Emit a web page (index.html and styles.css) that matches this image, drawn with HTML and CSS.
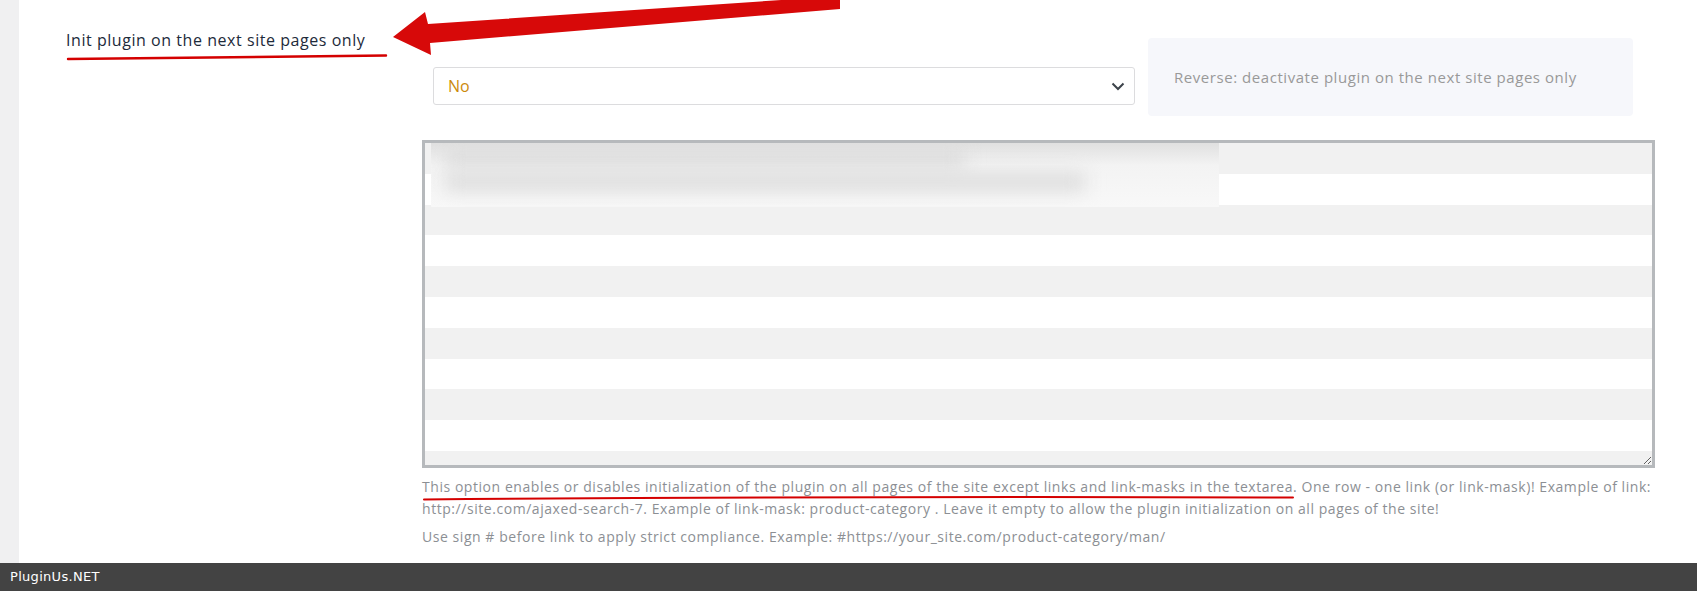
FILE: index.html
```html
<!DOCTYPE html>
<html lang="en">
<head>
  <meta charset="UTF-8">
  <meta name="viewport" content="width=device-width, initial-scale=1.0">
  <title>Init plugin on pages</title>
  <link rel="stylesheet" href="styles.css">
</head>
<body>

<div class="page">
  <div class="sidebar"></div>
  <div class="content">
    <div class="option-label">Init plugin on the next site pages only</div>

    <div class="option-field">
      <div class="top-row">
        <div class="select-wrap">
          <select class="mode-select">
            <option value="0">No</option>
            <option value="1">Yes</option>
          </select>
          <svg class="chevron" width="14" height="9" viewBox="0 0 14 9">
            <path d="M1.5 1.5 L7 7 L12.5 1.5" fill="none" stroke="#3c434a" stroke-width="2"/>
          </svg>
        </div>
        <div class="reverse-note">Reverse: deactivate plugin on the next site pages only</div>
      </div>

      <div class="textarea-wrap">
        <textarea class="links-area"></textarea>
        <!-- blurred-out links -->
        <div class="blurred">
          <div class="blur-line" style="width: 520px"></div>
          <div class="blur-line" style="width: 640px"></div>
        </div>
      </div>

      <p class="help">This option enables or disables initialization of the plugin on all pages of the site except links and link-masks in the textarea. One row - one link (or link-mask)! Example of link: http://site.com/ajaxed-search-7. Example of link-mask: product-category . Leave it empty to allow the plugin initialization on all pages of the site!</p>
      <p class="help">Use sign # before link to apply strict compliance. Example: #https://your_site.com/product-category/man/</p>
    </div>
  </div>
</div>

<div class="footer">PluginUs.NET</div>

<!-- red annotations drawn over the screenshot -->
<svg class="annotations" width="1697" height="591" viewBox="0 0 1697 591">
  <polygon points="393,37 425,12 428,24 840,-4 840,9 430,43 431,55" fill="#d70909"/>
  <path d="M68 59 Q 230 57 386 55.5" fill="none" stroke="#d40000" stroke-width="2.4" stroke-linecap="round"/>
  <path d="M424 499.5 Q 860 496 1293 497.5" fill="none" stroke="#d40000" stroke-width="2" stroke-linecap="round"/>
</svg>

</body>
</html>
```

FILE: styles.css
```css
body {
  margin: 0;
  position: relative;
  font-family: "Open Sans", Arial, sans-serif;
  background: #fff;
  overflow: hidden;
}
.page {
  display: flex;
  height: 563px;
}
.sidebar {
  width: 19px;
  background-color: #f0f0f1;
}
.content {
  flex: 1;
  display: grid;
  grid-template-columns: 403px 1233px;
}
.option-label {
  padding: 30px 0 0 47px;
  font-size: 16px;
  line-height: 20px;
  letter-spacing: 0.55px;
  color: #1d2a3a;
}
.option-field {
  padding-top: 38px;
}
.top-row {
  display: flex;
  align-items: flex-start;
  gap: 13px;
  margin-left: 11px;
}
.select-wrap {
  position: relative;
  margin-top: 29px;
}
.mode-select {
  appearance: none;
  -webkit-appearance: none;
  width: 702px;
  height: 38px;
  padding: 0 14px;
  font-family: "Open Sans", Arial, sans-serif;
  font-size: 16px;
  color: #cc8a0c;
  background: #fff;
  border: 1px solid #dcdcde;
  border-radius: 3px;
  outline: none;
}
.chevron {
  position: absolute;
  right: 10px;
  top: 15px;
  pointer-events: none;
}
.reverse-note {
  display: flex;
  align-items: center;
  width: 459px;
  height: 78px;
  padding-left: 26px;
  background-color: #f6f7fb;
  border-radius: 4px;
  font-size: 15px;
  letter-spacing: 0.55px;
  color: #999;
}
.textarea-wrap {
  position: relative;
  margin-top: 24px;
}
.links-area {
  display: block;
  box-sizing: border-box;
  width: 1233px;
  height: 328px;
  margin: 0;
  padding: 0;
  border: 3px solid #b6b9bc;
  background: repeating-linear-gradient(#f1f1f1 0, #f1f1f1 30.8px, #fff 30.8px, #fff 61.6px);
  resize: vertical;
}
.blurred {
  position: absolute;
  left: 9px;
  top: 3px;
  width: 788px;
  height: 64px;
  overflow: hidden;
  background: linear-gradient(#e0e0e0, #f3f3f3 35%, #f8f8f8);
}
.blur-line {
  height: 18px;
  margin: 6px 0 4px 14px;
  background-color: #dcdcdc;
  filter: blur(9px);
}
.help {
  margin: 8px 0 0;
  font-size: 14px;
  line-height: 22px;
  letter-spacing: 0.55px;
  color: #8c8f94;
}
.help + .help {
  margin-top: 6px;
}
.footer {
  height: 28px;
  padding-left: 10px;
  background-color: #434343;
  color: #fff;
  font-family: "DejaVu Sans", sans-serif;
  font-size: 13px;
  line-height: 28px;
  letter-spacing: 0.3px;
}
.annotations {
  position: absolute;
  top: 0;
  left: 0;
  pointer-events: none;
}
```
